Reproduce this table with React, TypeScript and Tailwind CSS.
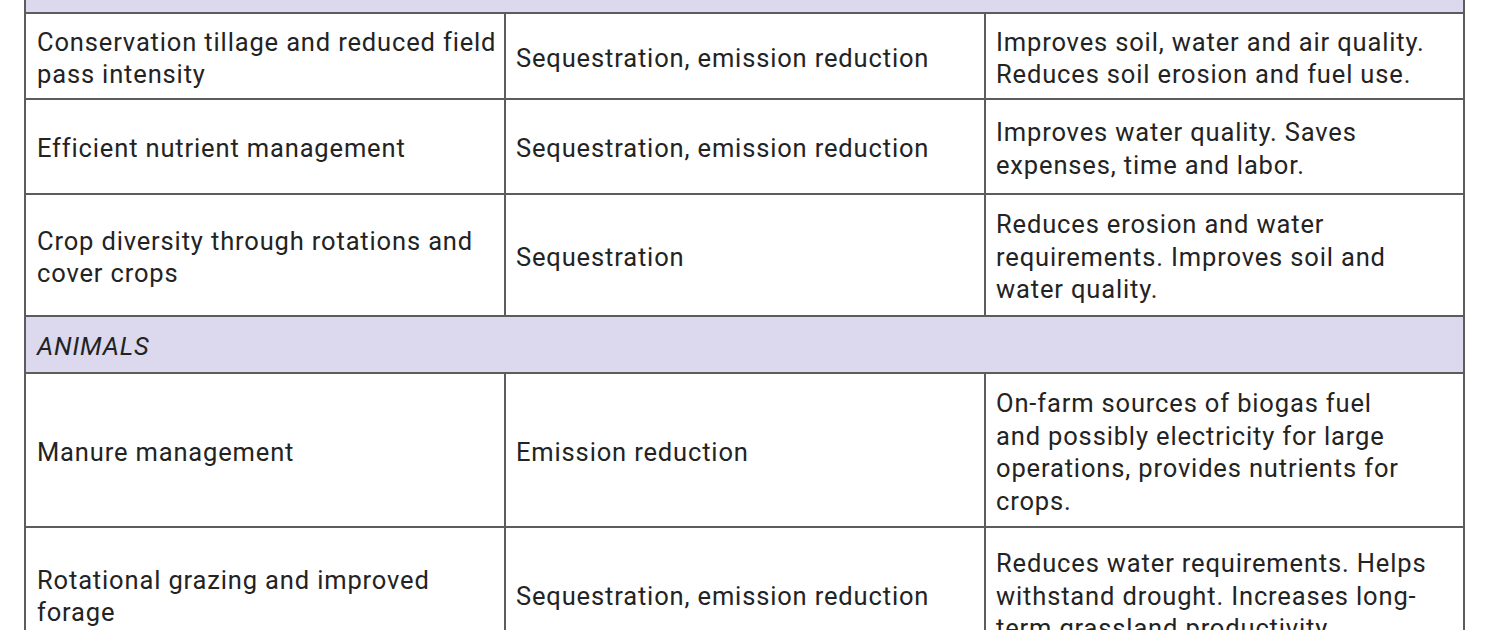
import React from 'react'

type Row = {
  practice: React.ReactNode
  benefit: React.ReactNode
  other: React.ReactNode
  height: string
}

const rows: (Row | { section: string; height: string })[] = [
  {
    practice: <>Conservation tillage and reduced field<br />pass intensity</>,
    benefit: 'Sequestration, emission reduction',
    other: <>Improves soil, water and air quality.<br />Reduces soil erosion and fuel use.</>,
    height: 'h-[86px]',
  },
  {
    practice: 'Efficient nutrient management',
    benefit: 'Sequestration, emission reduction',
    other: <>Improves water quality. Saves<br />expenses, time and labor.</>,
    height: 'h-[95px]',
  },
  {
    practice: <>Crop diversity through rotations and<br />cover crops</>,
    benefit: 'Sequestration',
    other: <>Reduces erosion and water<br />requirements. Improves soil and<br />water quality.</>,
    height: 'h-[122px]',
  },
  { section: 'ANIMALS', height: 'h-[57px]' },
  {
    practice: 'Manure management',
    benefit: 'Emission reduction',
    other: <>On-farm sources of biogas fuel<br />and possibly electricity for large<br />operations, provides nutrients for<br />crops.</>,
    height: 'h-[154px]',
  },
  {
    practice: <>Rotational grazing and improved<br />forage</>,
    benefit: 'Sequestration, emission reduction',
    other: <>Reduces water requirements. Helps<br />withstand drought. Increases long-<br />term grassland productivity.</>,
    height: 'h-[134px]',
  },
]

const cell = 'flex items-center pt-[4px] px-[10px] border-r-2 border-b-2 border-[#5c5c5c] whitespace-nowrap'

export default function App() {
  return (
    <div
      className="h-[630px] w-[1500px] overflow-hidden bg-white text-[25.5px] leading-[32.5px] tracking-[0.85px] text-[#232323]"
      style={{ fontFamily: 'Roboto, "Noto Sans", sans-serif' }}
    >
      <div className="ml-[24px] w-[1441px] border-l-2 border-[#5c5c5c]">
        {/* header row, mostly out of view */}
        <div className="h-[14px] bg-[#dcd9ee] border-r-2 border-b-2 border-[#5c5c5c]" />

        {rows.map((r, i) =>
          'section' in r ? (
            <div
              key={i}
              className={`${r.height} flex items-center pt-[4px] pl-[11px] bg-[#dcd9ee] border-r-2 border-b-2 border-[#5c5c5c] italic`}
            >
              {r.section}
            </div>
          ) : (
            <div key={i} className={`${r.height} grid grid-cols-[480px_480px_479px]`}>
              <div className={`${cell} pl-[11px]`}>
                <div>{r.practice}</div>
              </div>
              <div className={cell}>
                <div>{r.benefit}</div>
              </div>
              <div className={cell}>
                <div>{r.other}</div>
              </div>
            </div>
          )
        )}
      </div>
    </div>
  )
}
